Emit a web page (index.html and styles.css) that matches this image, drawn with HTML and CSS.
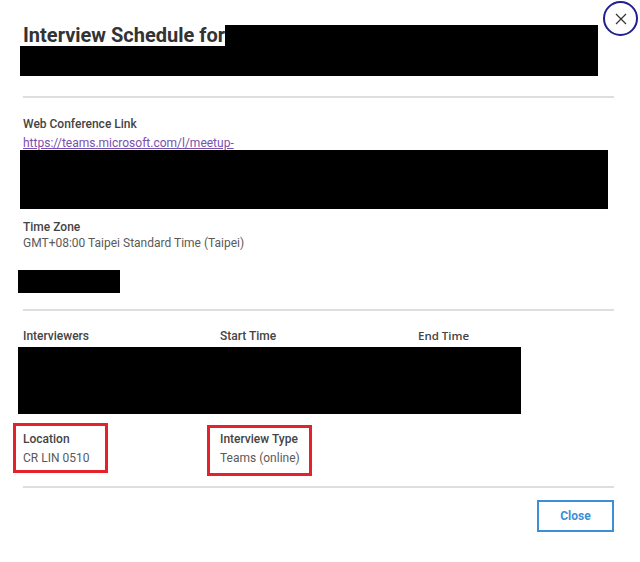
FILE: index.html
```html
<!DOCTYPE html>
<html lang="en">
<head>
<meta charset="utf-8">
<title>Interview Schedule</title>
<link rel="stylesheet" href="styles.css">
</head>
<body>
<div class="modal">
  <button class="x-btn" aria-label="Close dialog">
    <svg width="14" height="14" viewBox="0 0 14 14"><path d="M2 2 L12 12 M12 2 L2 12" stroke="#333" stroke-width="1.2" fill="none"/></svg>
  </button>
  <header class="head">
    <h1 class="title">Interview Schedule for<span class="redact redact-title"></span></h1>
    <div class="redact redact-title2"></div>
  </header>
  <div class="divider"></div>
  <section class="sec sec1">
    <div class="label">Web Conference Link</div>
    <a class="link" href="#">https://teams.microsoft.com/l/meetup-</a>
    <div class="redact redact-link"></div>
    <div class="label tz-label">Time Zone</div>
    <div class="value tz-value">GMT+08:00 Taipei Standard Time (Taipei)</div>
    <div class="redact redact-date"></div>
  </section>
  <div class="divider"></div>
  <section class="sec sec2">
    <div class="grid">
      <div class="label">Interviewers</div>
      <div class="label">Start Time</div>
      <div class="label end-label">End Time</div>
    </div>
    <div class="redact redact-rows"></div>
    <div class="grid grid2">
      <div class="cell">
        <span class="mark mark-loc"></span>
        <div class="label">Location</div>
        <div class="value v2">CR LIN 0510</div>
      </div>
      <div class="cell">
        <span class="mark mark-type"></span>
        <div class="label">Interview Type</div>
        <div class="value v2">Teams (online)</div>
      </div>
      <div class="cell"></div>
    </div>
  </section>
  <div class="divider"></div>
  <footer class="foot">
    <button class="close-btn">Close</button>
  </footer>
</div>
</body>
</html>
```

FILE: styles.css
```css
html, body {
  margin: 0;
  padding: 0;
  background: #ffffff;
}
body {
  font-family: Roboto, "Liberation Sans", Arial, sans-serif;
  color: #555;
}
.modal {
  position: relative;
  width: 640px;
  height: 562px;
  box-sizing: border-box;
  padding: 0 26px 0 23px;
  background: #fff;
}
.x-btn {
  position: absolute;
  top: 1px;
  left: 603px;
  width: 35px;
  height: 35px;
  box-sizing: border-box;
  border: 2px solid #1f1f8f;
  border-radius: 50%;
  background: #fff;
  padding: 0;
  display: flex;
  align-items: center;
  justify-content: center;
}
.x-btn svg { display: block; }
.head {
  padding-top: 25px;
}
.title {
  margin: 0;
  font-size: 20px;
  line-height: 21px;
  font-weight: 700;
  color: #333;
  white-space: nowrap;
}
.redact {
  background: #000;
}
.redact-title {
  display: inline-block;
  vertical-align: top;
  width: 373px;
  height: 21px;
  margin-left: 0;
}
.redact-title2 {
  width: 578px;
  height: 30px;
  margin-left: -3px;
}
.divider {
  height: 2px;
  background: #dedede;
}
.head + .divider { margin-top: 20px; }
.sec1 {
  padding: 19px 0 16px;
}
.label {
  font-size: 12px;
  line-height: 14px;
  font-weight: 500;
  color: #444;
}
.value {
  font-size: 12px;
  line-height: 14px;
  color: #5a5a5a;
}
.link {
  display: block;
  margin-top: 5px;
  font-size: 12px;
  line-height: 14px;
  color: #7a4fae;
  text-decoration: underline;
}
.redact-link {
  width: 588px;
  height: 59px;
  margin-left: -3px;
}
.tz-label { margin-top: 11px; }
.tz-value { margin-top: 2px; }
.redact-date {
  width: 102px;
  height: 23px;
  margin: 20px 0 0 -5px;
}
.sec2 {
  padding: 18px 0 21px;
}
.grid {
  display: grid;
  grid-template-columns: 197px 198px 196px;
}
.end-label { font-family: "Open Sans", Roboto, sans-serif; font-weight: 600; font-size: 11.5px; }
.redact-rows {
  width: 503px;
  height: 67px;
  margin: 4px 0 0 -5px;
}
.grid2 { margin-top: 18px; }
.cell { position: relative; }
.v2 { margin-top: 5px; }
.mark {
  position: absolute;
  box-sizing: border-box;
  border: 3px solid #e3222b;
  pointer-events: none;
}
.mark-loc {
  left: -10px;
  top: -9px;
  width: 95px;
  height: 50px;
}
.mark-type {
  left: -13px;
  top: -7px;
  width: 105px;
  height: 51px;
}
.foot {
  display: flex;
  justify-content: flex-end;
  padding-top: 12px;
}
.close-btn {
  width: 77px;
  height: 32px;
  box-sizing: border-box;
  border: 2px solid #3b8fd9;
  background: #fff;
  color: #3b8fd9;
  font-family: Roboto, "Liberation Sans", Arial, sans-serif;
  font-size: 12px;
  font-weight: 700;
  padding: 0;
}
```
